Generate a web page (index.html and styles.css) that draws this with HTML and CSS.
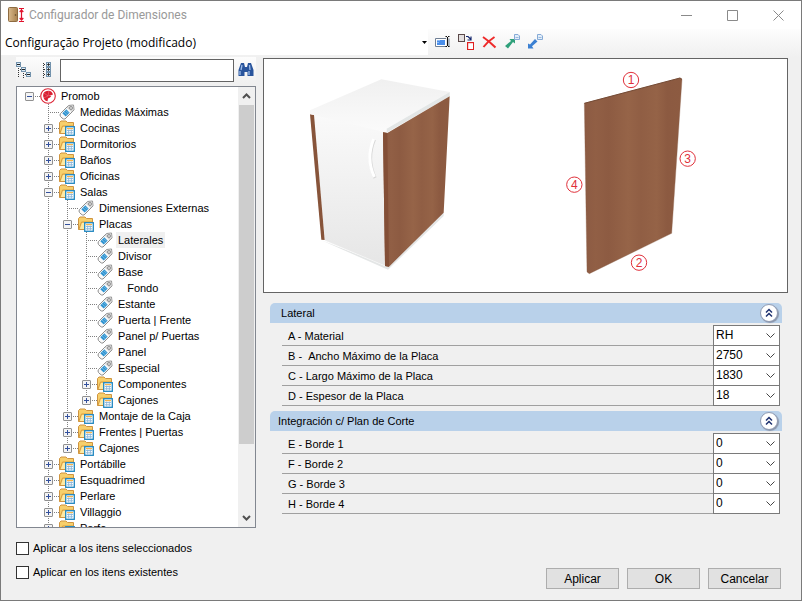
FILE: index.html
```html
<!DOCTYPE html>
<html lang="es">
<head>
  <meta charset="UTF-8" />
  <meta name="viewport" content="width=device-width, initial-scale=1.0"/>
  <title>Configurador de Dimensiones</title>
  <link rel="stylesheet" href="styles.css">
</head>
<body>
  <!-- iconos compartidos -->
  <svg class="sprite" aria-hidden="true">
    <symbol id="i-tag" viewBox="0 0 16 16">
      <path d="M9.5 1.5 L14.5 1 L15 6 L6 15 Q4.500 15.500 3 14 L1.500 12.500 Q0.500 11 1.500 9.500 Z" fill="#fafafa" stroke="#8d8d8d"/>
      <path d="M9.500 2 L14.200 1.500 L14.500 6 L12.500 8 L7.800 3.700 Z" fill="#d6d6d6"/>
      <circle cx="12" cy="4" r="1.400" fill="#fff" stroke="#777" stroke-width=".9"/>
      <path d="M7.300 5.300 L10.700 8.700 L6.700 12.500 L3.300 9.200 Z" fill="#2f93d0"/>
      <path d="M5 8 L8.500 11 M6.500 6.500 L10 9.500" stroke="#8cc9ec" stroke-width=".7"/>
    </symbol>
    <symbol id="i-folder" viewBox="0 0 16 16">
      <path d="M.5 13.500 V2.500 L2 1 H7 L8.500 2.500 H14.500 V13.500 Z" fill="#f7cf6b" stroke="#cf9440"/>
      <path d="M.8 13.500 L3.500 6 H14.500" fill="none" stroke="#d59c42"/>
      <path d="M2 13 L4 7 H14 V13 Z" fill="#fde9a5"/>
      <rect x="6.700" y="6.700" width="8.600" height="8.600" fill="#fff" stroke="#2187c0" stroke-width="1.300"/>
      <path d="M8 8.600 H14" stroke="#f5b44b" stroke-width="1.200"/>
      <path d="M8 10.500 H14 M8 12.800 H14 M9.700 9.500 V14.500 M12.300 9.500 V14.500" stroke="#8ab5da" stroke-width=".9"/>
    </symbol>
    <symbol id="i-promob" viewBox="0 0 16 16">
      <circle cx="8" cy="8" r="7.300" fill="#fff" stroke="#dd2435" stroke-width="1.100"/>
      <path d="M8.300 8 L13 6.500 Q12 3 8.500 2.700 Q4.800 2.800 3.400 5.500 Q2.300 8.500 4.200 11.300 Q5.500 13.200 7.500 13.300 L8 10.500 L10 9.500 L11.500 7.800 Z" fill="#d91f32"/>
      <path d="M8 8 L9 2.500 M8 8 L4 5 M8 8 L3.500 10" stroke="#f3a0a8" stroke-width=".4"/>
    </symbol>
    <symbol id="i-up2" viewBox="0 0 16 16">
      <path d="M5 7.500 L8 4.500 L11 7.500 M5 11.500 L8 8.500 L11 11.500" fill="none" stroke="#1f3270" stroke-width="1.500"/>
    </symbol>
    <symbol id="i-page" viewBox="0 0 6 6">
      <path d="M.5 .5 H4 L5.500 2 V5.500 H.5 Z" fill="#e3eefa" stroke="#86abd6"/>
      <path d="M1.500 3.500 H4.500" stroke="#86abd6" stroke-width=".8"/>
    </symbol>
  </svg>

  <div class="window">
    <header class="titlebar">
      <svg class="app-icon" viewBox="0 0 17 16">
        <defs>
          <linearGradient id="door"><stop offset="0" stop-color="#d9b98c"/><stop offset="1" stop-color="#a8814e"/></linearGradient>
        </defs>
        <rect x=".5" y=".5" width="9" height="14" rx="1" fill="url(#door)" stroke="#8d6b41"/>
        <circle cx="7.500" cy="8" r=".8" fill="#5e4526"/>
        <path d="M11 1.500 H16 M11 14.500 H16 M13.500 2 V14 M11.700 5 L13.500 3 L15.300 5 M11.700 11 L13.500 13 L15.300 11" fill="none" stroke="#e0122c" stroke-width="1.200"/>
      </svg>
      <h1>Configurador de Dimensiones</h1>
      <div class="window-buttons">
        <button type="button" aria-label="Minimizar"><svg viewBox="0 0 11 11"><path d="M0 5.500 H11"/></svg></button>
        <button type="button" aria-label="Maximizar"><svg viewBox="0 0 11 11"><path d="M.5 .5 H10.500 V10.500 H.5 Z"/></svg></button>
        <button type="button" aria-label="Cerrar"><svg viewBox="0 0 11 11"><path d="M.5 .5 L10.500 10.500 M10.500 .5 L.5 10.500"/></svg></button>
      </div>
    </header>

    <div class="toolbar">
      <select class="project" aria-label="Configuración">
        <option>Configuração Projeto (modificado)</option>
      </select>
      <button type="button" aria-label="Renombrar">
        <svg viewBox="0 0 16 16">
          <path d="M11 4.500 H.5 V12.500 H11 M14 4.500 V12.500" fill="none" stroke="#6f7f95"/>
          <rect x="1" y="5" width="10" height="7" fill="#fff"/>
          <rect x="2" y="6" width="8" height="5" fill="#4a8eea"/>
          <path d="M2 6.500 H5 M2 8.500 H4" stroke="#8ab8f4"/>
          <path d="M10.500 2.500 H12 M13 2.500 H14.500 M12.500 3 V12 M10.500 12.500 H12 M13 12.500 H14.500" stroke="#111" stroke-width="1.100"/>
        </svg>
      </button>
      <button type="button" aria-label="Duplicar">
        <svg viewBox="0 0 16 16">
          <rect x=".5" y=".5" width="6" height="7" fill="#e4e0e0" stroke="#5b4a4a"/>
          <rect x="9.600" y="8.600" width="6" height="7" fill="#fff" stroke="#e02020" stroke-width="1.200"/>
          <path d="M8 2.500 H10 L12.500 5 M13 2.500 V6 H9.500" fill="none" stroke="#16286e" stroke-width="1.200"/>
        </svg>
      </button>
      <button type="button" aria-label="Eliminar">
        <svg viewBox="0 0 16 16"><path d="M2 3 Q8 7 14.500 13.500 M13.500 3 Q7 7 2.500 13" fill="none" stroke="#ee2a2a" stroke-width="2"/></svg>
      </button>
      <button type="button" aria-label="Exportar">
        <svg viewBox="0 0 16 16">
          <path d="M11 5 V9.500 L9 8 L4 14.500 L1 12 L7 7 L5.500 5 Z" fill="#2fa07a"/>
          <use href="#i-page" x="10" y="0" width="6" height="6"/>
        </svg>
      </button>
      <button type="button" aria-label="Importar">
        <svg viewBox="0 0 16 16">
          <path d="M1 14.500 V9.500 L3 10.500 L8 5 L10.500 7.500 L5 12.300 L6.500 14.500 Z" fill="#3b80d2"/>
          <use href="#i-page" x="10" y="0" width="6" height="6"/>
        </svg>
      </button>
    </div>

    <div class="main">
      <section class="left">
        <div class="search">
          <button type="button" aria-label="Contraer todo">
            <svg viewBox="0 0 16 16">
              <path d="M2.500 4 V16 M7.500 9 V16 M4 7.500 H5 M9 12.500 H10" stroke="#333" stroke-dasharray="1 1"/>
              <g fill="#dcecf8" stroke="#7292ac"><rect x=".5" y=".5" width="4" height="4"/><rect x="5.500" y="5.500" width="4" height="4"/><rect x="10.500" y="10.500" width="4" height="4"/></g>
              <path d="M1 2.500 H4 M6 7.500 H9 M11 12.500 H14" stroke="#222"/>
            </svg>
          </button>
          <button type="button" aria-label="Expandir todo">
            <svg viewBox="0 0 16 16">
              <path d="M5.500 1 V16 M6 2.500 H8 M6 7.500 H8 M6 12.500 H8" stroke="#333" stroke-dasharray="1 1"/>
              <g fill="#dcecf8" stroke="#7292ac"><rect x="8.500" y=".5" width="4" height="4"/><rect x="8.500" y="5.500" width="4" height="4"/><rect x="8.500" y="10.500" width="4" height="4"/></g>
              <path d="M9 2.500 H12 M9 7.500 H12 M9 12.500 H12 M10.500 1 V4 M10.500 6 V9 M10.500 11 V14" stroke="#222" stroke-width=".8"/>
            </svg>
          </button>
          <input type="text" aria-label="Buscar">
          <button type="button" aria-label="Buscar">
            <svg viewBox="0 0 16 16">
              <path d="M3 1 H6 L7 5 H9 L10 1 H13 L15.500 8 V14 H9.500 V10 H6.500 V14 H.5 V8 Z" fill="#29549c"/>
              <path d="M2 9 V13 M11 9 V13 M4 3 L3 8 M11.500 3 L12 8" stroke="#9dbce8" stroke-width="1.300"/>
            </svg>
          </button>
        </div>

        <div class="tree-box">
          <ul class="tree">
            <li>
              <div class="node"><button type="button" class="minus" aria-label="Contraer"></button><svg><use href="#i-promob"/></svg><span>Promob</span></div>
              <ul>
                <li><div class="node leaf"><svg><use href="#i-tag"/></svg><span>Medidas Máximas</span></div></li>
                <li><div class="node"><button type="button" class="plus" aria-label="Expandir"></button><svg><use href="#i-folder"/></svg><span>Cocinas</span></div></li>
                <li><div class="node"><button type="button" class="plus" aria-label="Expandir"></button><svg><use href="#i-folder"/></svg><span>Dormitorios</span></div></li>
                <li><div class="node"><button type="button" class="plus" aria-label="Expandir"></button><svg><use href="#i-folder"/></svg><span>Baños</span></div></li>
                <li><div class="node"><button type="button" class="plus" aria-label="Expandir"></button><svg><use href="#i-folder"/></svg><span>Oficinas</span></div></li>
                <li>
                  <div class="node"><button type="button" class="minus" aria-label="Contraer"></button><svg><use href="#i-folder"/></svg><span>Salas</span></div>
                  <ul>
                    <li><div class="node leaf"><svg><use href="#i-tag"/></svg><span>Dimensiones Externas</span></div></li>
                    <li>
                      <div class="node"><button type="button" class="minus" aria-label="Contraer"></button><svg><use href="#i-folder"/></svg><span>Placas</span></div>
                      <ul>
                        <li><div class="node leaf"><svg><use href="#i-tag"/></svg><span class="selected">Laterales</span></div></li>
                        <li><div class="node leaf"><svg><use href="#i-tag"/></svg><span>Divisor</span></div></li>
                        <li><div class="node leaf"><svg><use href="#i-tag"/></svg><span>Base</span></div></li>
                        <li><div class="node leaf"><svg><use href="#i-tag"/></svg><span>&nbsp;&nbsp;&nbsp;Fondo</span></div></li>
                        <li><div class="node leaf"><svg><use href="#i-tag"/></svg><span>Estante</span></div></li>
                        <li><div class="node leaf"><svg><use href="#i-tag"/></svg><span>Puerta | Frente</span></div></li>
                        <li><div class="node leaf"><svg><use href="#i-tag"/></svg><span>Panel p/ Puertas</span></div></li>
                        <li><div class="node leaf"><svg><use href="#i-tag"/></svg><span>Panel</span></div></li>
                        <li><div class="node leaf"><svg><use href="#i-tag"/></svg><span>Especial</span></div></li>
                        <li><div class="node"><button type="button" class="plus" aria-label="Expandir"></button><svg><use href="#i-folder"/></svg><span>Componentes</span></div></li>
                        <li><div class="node"><button type="button" class="plus" aria-label="Expandir"></button><svg><use href="#i-folder"/></svg><span>Cajones</span></div></li>
                      </ul>
                    </li>
                    <li><div class="node"><button type="button" class="plus" aria-label="Expandir"></button><svg><use href="#i-folder"/></svg><span>Montaje de la Caja</span></div></li>
                    <li><div class="node"><button type="button" class="plus" aria-label="Expandir"></button><svg><use href="#i-folder"/></svg><span>Frentes | Puertas</span></div></li>
                    <li><div class="node"><button type="button" class="plus" aria-label="Expandir"></button><svg><use href="#i-folder"/></svg><span>Cajones</span></div></li>
                  </ul>
                </li>
                <li><div class="node"><button type="button" class="plus" aria-label="Expandir"></button><svg><use href="#i-folder"/></svg><span>Portábille</span></div></li>
                <li><div class="node"><button type="button" class="plus" aria-label="Expandir"></button><svg><use href="#i-folder"/></svg><span>Esquadrimed</span></div></li>
                <li><div class="node"><button type="button" class="plus" aria-label="Expandir"></button><svg><use href="#i-folder"/></svg><span>Perlare</span></div></li>
                <li><div class="node"><button type="button" class="plus" aria-label="Expandir"></button><svg><use href="#i-folder"/></svg><span>Villaggio</span></div></li>
                <li><div class="node"><button type="button" class="plus" aria-label="Expandir"></button><svg><use href="#i-folder"/></svg><span>Perfo</span></div></li>
              </ul>
            </li>
          </ul>
          <div class="scrollbar">
            <button type="button" aria-label="Subir"><svg viewBox="0 0 9 6"><path d="M1 5 L4.500 1.500 L8 5"/></svg></button>
            <div class="track"><div class="thumb"></div></div>
            <button type="button" aria-label="Bajar"><svg viewBox="0 0 9 6"><path d="M1 1 L4.500 4.500 L8 1"/></svg></button>
          </div>
        </div>

        <div class="checks">
          <label><input type="checkbox"> Aplicar a los itens seleccionados</label>
          <label><input type="checkbox"> Aplicar en los itens existentes</label>
        </div>
      </section>

      <section class="right">
        <div class="preview">
          <svg viewBox="0 9 1569 699" role="img" aria-label="Mueble y placa lateral">
            <defs>
              <linearGradient id="wood">
                <stop offset="0" stop-color="#8c5b43"/>
                <stop offset=".12" stop-color="#915f45"/>
                <stop offset=".25" stop-color="#8d5b42"/>
                <stop offset=".45" stop-color="#966448"/>
                <stop offset=".58" stop-color="#905e44"/>
                <stop offset=".74" stop-color="#956347"/>
                <stop offset=".85" stop-color="#8c5a41"/>
                <stop offset="1" stop-color="#8d5b41"/>
              </linearGradient>
              <linearGradient id="front" x1="0" y1="0" x2="0" y2="1">
                <stop offset="0" stop-color="#fafafa"/><stop offset="1" stop-color="#e6e6e6"/>
              </linearGradient>
              <linearGradient id="top" x1="0" y1="0" x2="0" y2="1">
                <stop offset="0" stop-color="#f0f0f0"/><stop offset="1" stop-color="#fbfbfb"/>
              </linearGradient>
            </defs>
            <!-- mueble -->
            <path d="M172 553 L372 641 L539 480 L539 470 L372 630 Z" fill="#e4e6e6"/>
            <path d="M183 553 L365 630" stroke="#f8f8f8" stroke-width="3"/>
            <path d="M148 173 L357 224 L362 628 L183 553 Z" fill="url(#front)"/>
            <path d="M138 175 L150 177 L182 552 L172 551 Z" fill="#87543a"/>
            <path d="M138 163 L352 70 L557 108 L368 218 L368 230 L138 174 Z" fill="url(#top)"/>
            <path d="M368 218 L557 108 V121 L368 230 Z" fill="#e3e6e6"/>
            <path d="M357 229 L370 231 L557 121 L539 470 L375 632 L363 630 Z" fill="url(#wood)"/>
            <path d="M357 229 L370 231 L375 632 L363 630 Z" fill="#834f37"/>
            <path d="M331 251 Q307 308 333 366" fill="none" stroke="#d8d8d8" stroke-width="10"/>
            <path d="M329 249 Q305 308 331 363" fill="none" stroke="#fff" stroke-width="9"/>
            <!-- placa -->
            <path d="M961 142 L1248 66 L1254 70 L1223 532 L976 653 L969 648 Z" fill="url(#wood)" stroke="#8b604b" stroke-width="1"/>
            <path d="M961 142 L1248 66 L1254 70" fill="none" stroke="#744a34" stroke-width="3"/>
            <g class="marks">
              <circle cx="1101" cy="72" r="23"/><text x="1101" y="84">1</text>
              <circle cx="1125" cy="620" r="23"/><text x="1125" y="632">2</text>
              <circle cx="1271" cy="308" r="23"/><text x="1271" y="320">3</text>
              <circle cx="931" cy="386" r="23"/><text x="931" y="398">4</text>
            </g>
          </svg>
        </div>

        <div class="group">
          <div class="group-title"><h2>&nbsp;Lateral</h2><button type="button" aria-label="Contraer"><svg><use href="#i-up2"/></svg></button></div>
          <div class="rows">
            <div class="row"><label for="a">A - Material</label><select id="a"><option>RH</option></select></div>
            <div class="row"><label for="b">B - &nbsp;Ancho Máximo de la Placa</label><select id="b"><option>2750</option></select></div>
            <div class="row"><label for="c">C - Largo Máximo de la Placa</label><select id="c"><option>1830</option></select></div>
            <div class="row"><label for="d">D - Espesor de la Placa</label><select id="d"><option>18</option></select></div>
          </div>
        </div>

        <div class="group">
          <div class="group-title"><h2>Integración c/ Plan de Corte</h2><button type="button" aria-label="Contraer"><svg><use href="#i-up2"/></svg></button></div>
          <div class="rows">
            <div class="row"><label for="e">E - Borde 1</label><select id="e"><option>0</option></select></div>
            <div class="row"><label for="f">F - Borde 2</label><select id="f"><option>0</option></select></div>
            <div class="row"><label for="g">G - Borde 3</label><select id="g"><option>0</option></select></div>
            <div class="row"><label for="h">H - Borde 4</label><select id="h"><option>0</option></select></div>
          </div>
        </div>

        <div class="actions">
          <button type="button">Aplicar</button>
          <button type="button">OK</button>
          <button type="button">Cancelar</button>
        </div>
      </section>
    </div>
  </div>
</body>
</html>
```

FILE: styles.css
```css
* {
  box-sizing: border-box;
}

body {
  margin: 0;
  font-family: "Liberation Sans", Arial, sans-serif;
  font-size: 11px;
  color: #000;
}

button, input, select {
  font: inherit;
  color: inherit;
  margin: 0;
}

button {
  padding: 0;
  border: none;
  background: none;
}

svg {
  display: block;
}

ul {
  list-style: none;
  margin: 0;
  padding: 0;
}

.sprite {
  display: none;
}

.window {
  display: flex;
  flex-direction: column;
  height: 100vh;
  min-height: 560px;
  border: 1px solid #7a7a7a;
  background: #f0f0f0;
}

/* barra de título */
.titlebar {
  display: flex;
  align-items: center;
  gap: 4px;
  height: 28px;
  padding-left: 7px;
  background: #fff;
}

.app-icon {
  width: 17px;
  height: 16px;
}

h1 {
  flex: 1;
  margin: 0;
  font-family: Roboto, sans-serif;
  font-size: 12px;
  font-weight: normal;
  color: #999;
}

.window-buttons {
  display: flex;
}

.window-buttons button {
  display: flex;
  align-items: center;
  justify-content: center;
  width: 46px;
  height: 26px;
}

.window-buttons svg {
  width: 11px;
  height: 11px;
  fill: none;
  stroke: #8a8a8a;
}

/* barra de herramientas */
.toolbar {
  display: flex;
  align-items: center;
  gap: 7px;
  height: 28px;
  padding-bottom: 2px;
  background: linear-gradient(#fdfdfd, #f0f0f0);
}

.toolbar svg {
  width: 16px;
  height: 16px;
}

.project {
  width: 427px;
  height: 26px;
  padding: 0 4px;
  border: none;
  appearance: none;
  font-family: "Open Sans", sans-serif;
  font-size: 12px;
  background: #fff url("data:image/svg+xml,%3Csvg xmlns='http://www.w3.org/2000/svg' width='5' height='3'%3E%3Cpath d='M0 0H5L2.500 3Z'/%3E%3C/svg%3E") no-repeat right 1px center;
}

.main {
  display: flex;
  flex: 1;
  gap: 7px;
  min-height: 0;
  padding: 0 13px 0 15px;
}

/* panel izquierdo */
.left {
  display: flex;
  flex-direction: column;
  width: 240px;
}

.search {
  display: flex;
  align-items: center;
  gap: 6px;
  height: 26px;
  margin-bottom: 3px;
  background: linear-gradient(#fcfcfc, #f0f0f0);
}

.search svg {
  width: 16px;
  height: 16px;
}

.search input {
  flex: 1;
  min-width: 0;
  height: 23px;
  padding: 0 4px;
  border: 1px solid #646464;
  background: #fff;
}

.search button:last-child {
  margin: 0 2px 0 -2px;
}

.tree-box {
  display: flex;
  flex: 1;
  min-height: 0;
  border: 1px solid #828790;
  background: #fff;
}

.tree {
  flex: 1;
  overflow: hidden;
  padding: 1px 0 0 8px;
  white-space: nowrap;
}

.tree ul {
  margin-left: 19px;
}

.tree ul li {
  background: repeating-linear-gradient(#808080 0 1px, transparent 1px 2px) 4px 0 / 1px 100% no-repeat;
}

.tree ul ul li:last-child {
  background-size: 1px 8px;
}

.node {
  display: flex;
  align-items: center;
  height: 16px;
  background: repeating-linear-gradient(90deg, #808080 0 1px, transparent 1px 2px) 4px 8px / 11px 1px no-repeat;
}

.node button {
  width: 9px;
  height: 9px;
  margin-right: 6px;
  border: 1px solid #919191;
  border-radius: 1px;
}

.minus {
  background: linear-gradient(#33509c, #33509c) center / 5px 1px no-repeat #f4f4f4;
}

.plus {
  background: linear-gradient(#33509c, #33509c) center / 5px 1px no-repeat, linear-gradient(#33509c, #33509c) center / 1px 5px no-repeat #f4f4f4;
}

.node svg {
  width: 16px;
  height: 16px;
  margin-right: 3px;
}

.node span {
  padding: 0 2px;
  line-height: 16px;
}

.leaf {
  padding-left: 15px;
}

.node .selected {
  background: #f0f0f0;
}

.scrollbar {
  display: flex;
  flex-direction: column;
  width: 17px;
  background: #f0f0f0;
}

.scrollbar button {
  display: flex;
  align-items: center;
  justify-content: center;
  height: 18px;
}

.scrollbar svg {
  width: 9px;
  height: 6px;
  fill: none;
  stroke: #505050;
  stroke-width: 2;
}

.track {
  flex: 1;
}

.thumb {
  width: 15px;
  height: 84%;
  margin: auto;
  background: #cdcdcd;
}

.checks {
  display: flex;
  flex-direction: column;
  gap: 8px;
  padding: 12px 0 20px;
}

.checks label {
  display: flex;
  align-items: center;
  gap: 4px;
  height: 16px;
}

.checks input {
  appearance: none;
  width: 13px;
  height: 13px;
  border: 1px solid #333;
  background: #fff;
}

/* panel derecho */
.right {
  display: flex;
  flex: 1;
  flex-direction: column;
  min-width: 0;
}

.preview {
  margin: 1px 0 10px;
  border: 1px solid #646464;
  background: #fff;
}

.preview svg {
  width: 100%;
}

.marks circle {
  fill: none;
  stroke: #e0303a;
  stroke-width: 3;
}

.marks text {
  font-size: 36px;
  text-anchor: middle;
  fill: #e0303a;
}

.group {
  margin: 0 6px 5px 7px;
}

.group-title {
  display: flex;
  align-items: center;
  justify-content: space-between;
  height: 20px;
  padding: 0 4px 0 8px;
  border-radius: 5px 5px 0 0;
  background: #b9d1ea;
}

h2 {
  margin: 0;
  font-size: 11px;
  font-weight: normal;
}

.group-title button {
  border: 1px solid #8f9bb3;
  border-radius: 50%;
  background: #fff;
  box-shadow: 1px 1px 1px #8a94a8;
}

.group-title svg {
  width: 16px;
  height: 16px;
}

.rows {
  padding: 3px 2px 0 12px;
}

.row {
  display: flex;
  height: 20px;
}

.row label {
  flex: 1;
  padding-left: 6px;
  border-bottom: 1px solid #a0a0a0;
  line-height: 20px;
}

.row select {
  width: 67px;
  height: 21px;
  margin-top: -1px;
  padding: 0 2px 2px;
  border: 1px solid #7a7a7a;
  border-radius: 0;
  appearance: none;
  font-size: 12px;
  background: #fff url("data:image/svg+xml,%3Csvg xmlns='http://www.w3.org/2000/svg' width='9' height='6'%3E%3Cpath d='M.5 .5L4.500 4.500L8.500 .5' fill='none' stroke='%23444'/%3E%3C/svg%3E") no-repeat right 4px center;
}

.actions {
  display: flex;
  justify-content: flex-end;
  gap: 8px;
  margin-top: auto;
  padding: 0 7px 11px 0;
}

.actions button {
  width: 73px;
  height: 21px;
  border: 1px solid #adadad;
  background: #e1e1e1;
  font-size: 12px;
}
```
